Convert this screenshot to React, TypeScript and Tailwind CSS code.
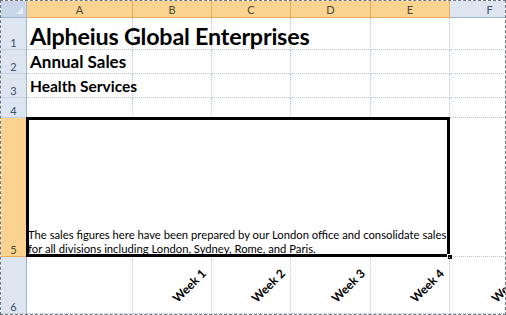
import React from "react";

const font = { fontFamily: "Lato, 'Open Sans', sans-serif" };

function ColHead({ label, selected }: { label: string; selected?: boolean }) {
  return (
    <div
      className={
        "flex items-center justify-center text-[11px] leading-none border-r border-b " +
        (selected
          ? "bg-[#f9d38f] border-r-[#eeaa5a] border-b-[#eeaa5a] text-[#4a4a3a]"
          : "bg-[#dde5f0] border-r-[#9eb6ce] border-b-[#9eb6ce] text-[#3c4f6b]")
      }
    >
      {label}
    </div>
  );
}

function RowHead({ label, selected }: { label: string; selected?: boolean }) {
  return (
    <div
      className={
        "flex items-end justify-center pb-[1px] text-[11px] leading-none border-r border-b " +
        (selected
          ? "bg-[#f9d38f] border-r-[#eeaa5a] border-b-[#eeaa5a] text-[#4a4a3a]"
          : "bg-[#dde5f0] border-r-[#9eb6ce] border-b-[#c3d1e2] text-[#3c4f6b]")
      }
    >
      {label}
    </div>
  );
}

function Cell({ children, className = "" }: { children?: React.ReactNode; className?: string }) {
  return (
    <div className={"border-r border-b border-dotted border-[#b9c2d8] " + className}>{children}</div>
  );
}

function WeekCell({ label, last }: { label: string; last?: boolean }) {
  return (
    <div
      className={
        "relative flex items-end justify-end pr-[1px] pb-[20px] border-b border-dotted border-[#b9c2d8] " +
        (last ? "" : "border-r")
      }
    >
      <span className="block -rotate-45 text-[12px] font-bold leading-[14px] whitespace-nowrap text-black">
        {label}
      </span>
    </div>
  );
}

export default function App() {
  return (
    <div
      className="w-[506px] h-[315px] overflow-hidden bg-white border border-dashed border-[#6b7280]"
      style={font}
    >
      <div className="grid grid-cols-[26px_106px_79px_79px_80px_79px_80px] grid-rows-[17px_32px_24px_24px_20px_139px_57px] w-[529px]">
        {/* header row */}
        <div className="relative bg-[#c9d6ea] border-r border-b border-[#9eb6ce]">
          <svg className="absolute right-[3px] bottom-[3px]" width="7" height="7" viewBox="0 0 7 7">
            <polygon points="7,0 7,7 0,7" fill="#e8eef7" />
          </svg>
        </div>
        <ColHead label="A" selected />
        <ColHead label="B" selected />
        <ColHead label="C" selected />
        <ColHead label="D" selected />
        <ColHead label="E" selected />
        <ColHead label="F" />

        {/* row 1 */}
        <RowHead label="1" />
        <Cell className="relative overflow-visible">
          <span className="absolute left-[3px] bottom-[1px] text-[23.3px] font-bold leading-none whitespace-nowrap text-black tracking-[-0.2px]">
            Alpheius Global Enterprises
          </span>
        </Cell>
        <Cell />
        <Cell />
        <Cell />
        <Cell />
        <Cell className="border-r-0" />

        {/* row 2 */}
        <RowHead label="2" />
        <Cell className="flex items-end pl-[3px] pb-[3px]">
          <span className="text-[17px] font-bold leading-none whitespace-nowrap text-black">Annual Sales</span>
        </Cell>
        <Cell />
        <Cell />
        <Cell />
        <Cell />
        <Cell className="border-r-0" />

        {/* row 3 */}
        <RowHead label="3" />
        <Cell className="flex items-end pl-[3px] pb-[3px]">
          <span className="text-[15.5px] font-bold leading-none whitespace-nowrap text-black">Health Services</span>
        </Cell>
        <Cell />
        <Cell />
        <Cell />
        <Cell />
        <Cell className="border-r-0" />

        {/* row 4 */}
        <RowHead label="4" />
        <Cell />
        <Cell />
        <Cell />
        <Cell />
        <Cell />
        <Cell className="border-r-0" />

        {/* row 5 */}
        <RowHead label="5" selected />
        <div className="relative col-span-5 flex flex-col justify-end pl-[1px] pb-[1px] border-b border-r border-dotted border-[#b9c2d8]">
          <div className="text-[11.25px] leading-[13.5px] whitespace-nowrap text-black">
            The sales figures here have been prepared by our London office and consolidate sales
            <br />
            for all divisions including London, Sydney, Rome, and Paris.
          </div>
          <div className="absolute -left-px -top-px -right-px bottom-[-1px] border-[3px] border-black pointer-events-none" />
          <div className="absolute right-[-4px] bottom-[-4px] w-[6px] h-[6px] bg-black border border-white" />
        </div>
        <Cell className="border-r-0" />

        {/* row 6 */}
        <RowHead label="6" />
        <Cell />
        <WeekCell label="Week 1" />
        <WeekCell label="Week 2" />
        <WeekCell label="Week 3" />
        <WeekCell label="Week 4" />
        <WeekCell label="Week 5" last />
      </div>
    </div>
  );
}
